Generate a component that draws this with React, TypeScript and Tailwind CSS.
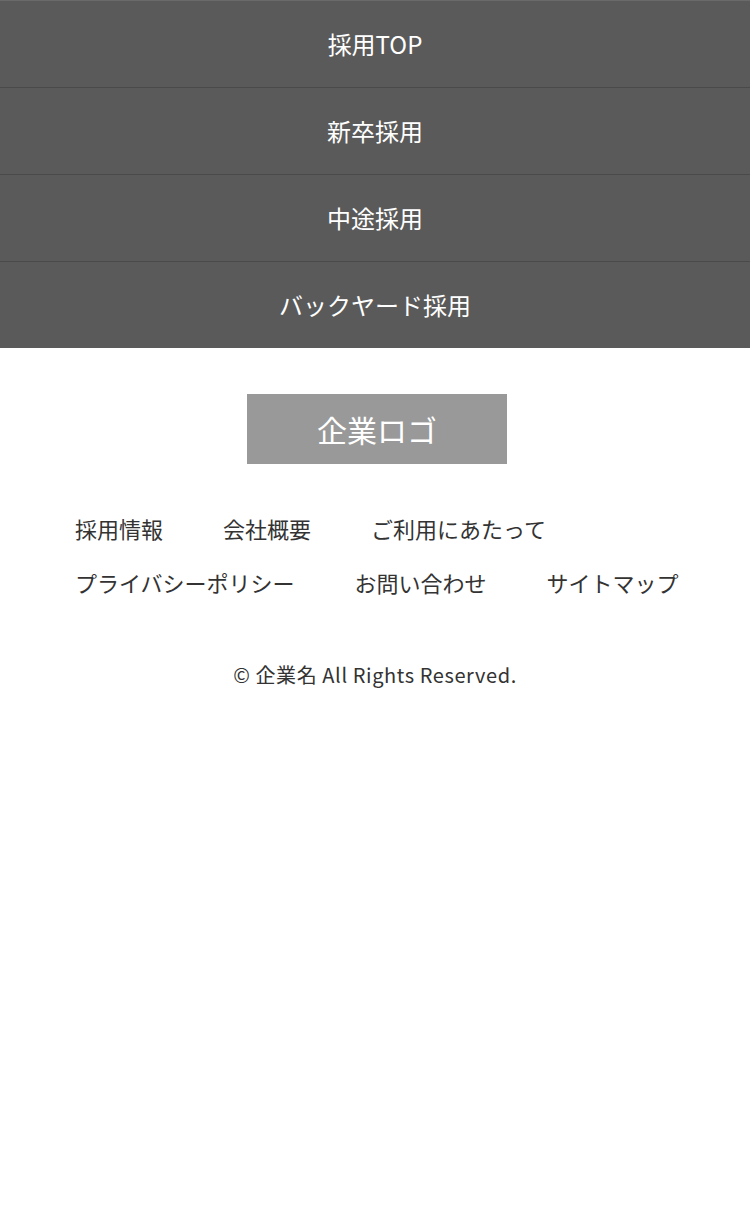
import React from 'react'

const menu = ['採用TOP', '新卒採用', '中途採用', 'バックヤード採用']
const links = ['採用情報', '会社概要', 'ご利用にあたって', 'プライバシーポリシー', 'お問い合わせ', 'サイトマップ']

function App() {
  return (
    <div className="min-h-[1206px] w-[750px] bg-white font-['Noto_Sans_CJK_JP','Noto_Sans',sans-serif]">
      <nav className="border-t border-[#6a6a6a] bg-[#5a5a5a]">
        {menu.map((item, index) => (
          <div
            key={index}
            className={`flex items-center justify-center text-[24px] text-white ${index < menu.length - 1 ? 'h-[87px] border-b border-[#4a4a4a]' : 'h-[86px]'}`}
          >
            {item}
          </div>
        ))}
      </nav>
      <div className="mt-[46px] flex justify-center pl-[4px]">
        <div className="flex h-[70px] w-[260px] items-center justify-center bg-[#999999] text-[30px] text-white">
          企業ロゴ
        </div>
      </div>
      <ul className="mt-[48px] flex flex-wrap gap-x-[60px] gap-y-[22px] pl-[75px] pr-[71px]">
        {links.map((item, index) => (
          <li key={index} className="text-[22px] leading-[32px] text-[#333333]">
            {item}
          </li>
        ))}
      </ul>
      <p className="mt-[62px] text-center text-[20px] leading-[30px] tracking-[0.6px] text-[#333333]">
        © 企業名 All Rights Reserved.
      </p>
    </div>
  )
}

export default App
